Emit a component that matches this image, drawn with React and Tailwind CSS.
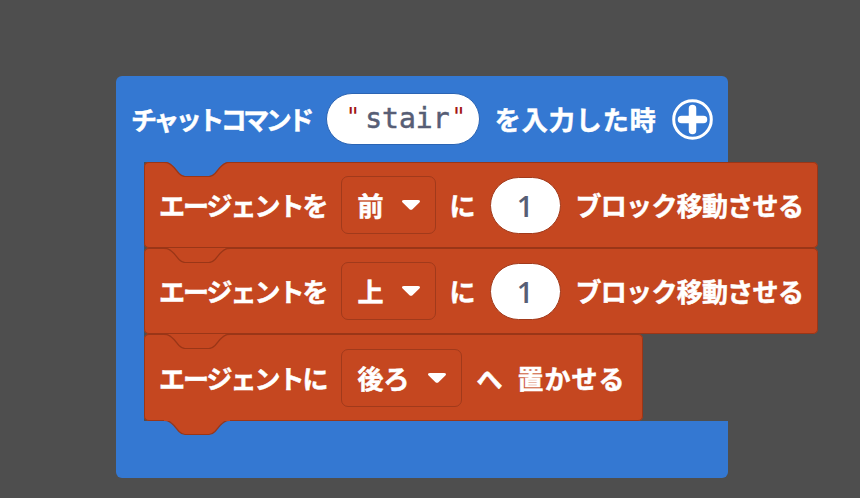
import React from "react";

const JP = { fontFamily: '"Noto Sans CJK JP", "Noto Sans", sans-serif' };

function Notch({ fill }) {
  return (
    <svg
      className="absolute top-0 left-[20px]"
      width="66"
      height="15"
      viewBox="0 0 66 15"
    >
      <path
        d="M0 0 C5 0 7 2 10 5 L15 11 C17 13 18 14 21 14 L45 14 C48 14 49 13 51 11 L56 5 C59 2 61 0 66 0 Z"
        fill={fill}
      />
      <path
        d="M0 0.5 C5 0.5 7 2.5 10 5.5 L15 11.5 C17 13.5 18 14.5 21 14.5 L45 14.5 C48 14.5 49 13.5 51 11.5 L56 5.5 C59 2.5 61 0.5 66 0.5"
        fill="none"
        stroke="#9a3617"
        strokeWidth="1.2"
      />
    </svg>
  );
}

function Tab() {
  return (
    <svg
      className="absolute top-[calc(100%-1px)] left-[20px]"
      width="66"
      height="16"
      viewBox="0 0 66 16"
    >
      <path
        d="M0 0 C5 0 7 2 10 5 L15 11 C17 13 18 14 21 14 L45 14 C48 14 49 13 51 11 L56 5 C59 2 61 0 66 0 Z"
        fill="#c54720"
      />
      <path
        d="M0 0.5 C5 0.5 7 2.5 10 5.5 L15 11.5 C17 13.5 18 14.5 21 14.5 L45 14.5 C48 14.5 49 13.5 51 11.5 L56 5.5 C59 2.5 61 0.5 66 0.5"
        fill="none"
        stroke="#9a3617"
        strokeWidth="1.2"
      />
      <rect x="0" y="0" width="66" height="1" fill="#c54720" />
    </svg>
  );
}

function Arrow() {
  return (
    <svg width="20" height="12" viewBox="0 0 20 12">
      <path
        d="M3 1 L17 1 C19 1 19.6 2.4 18.4 3.6 L11.5 10.2 C10.7 11 9.3 11 8.5 10.2 L1.6 3.6 C0.4 2.4 1 1 3 1 Z"
        fill="#ffffff"
      />
    </svg>
  );
}

function Dropdown({ label }) {
  return (
    <div className="shrink-0 h-[58px] pl-[15px] pr-[14px] flex items-center gap-[17px] rounded-[7px] border border-[#a13a1b] bg-[#c54720]">
      <span
        className="text-white text-[26px] font-bold leading-none [-webkit-text-stroke:0.5px_#ffffff]"
        style={JP}
      >
        {label}
      </span>
      <Arrow />
    </div>
  );
}

function NumPill() {
  return (
    <div className="shrink-0 h-[57px] w-[71px] rounded-full bg-white border border-[#a13a1b] flex items-center justify-center">
      <span
        className="text-[#575e75] text-[29px] font-semibold leading-none"
        style={{ fontFamily: '"Open Sans", "Noto Sans", sans-serif' }}
      >
        1
      </span>
    </div>
  );
}

function T({ children, className = "" }) {
  return (
    <span
      className={
        "shrink-0 text-white text-[26px] font-bold leading-none whitespace-nowrap [-webkit-text-stroke:0.5px_#ffffff] " +
        className
      }
      style={JP}
    >
      {children}
    </span>
  );
}

function RedBlock({ children, notchFill, tab, width, h }) {
  return (
    <div
      className={
        "relative shrink-0 rounded-[5px] bg-[#c54720] shadow-[inset_0_0_0_1px_#9a3617] flex items-center px-[15px] gap-[15px] " +
        width +
        " " +
        h
      }
    >
      <Notch fill={notchFill} />
      {children}
      {tab && <Tab />}
    </div>
  );
}

export default function App() {
  return (
    <div className="w-[860px] h-[498px] overflow-hidden bg-[#4e4e4e] pt-[76px] pl-[116px]">
      <div className="relative w-[612px]">
        {/* header */}
        <div className="h-[86px] rounded-t-[6px] bg-[#3478d2] flex items-center pl-[15px] pr-[14px]">
          <T className="tracking-[-3.5px]">チャットコマンド</T>
          <div
            className="shrink-0 ml-[15px] h-[52px] w-[154px] rounded-full bg-white border border-[#2b64b3] flex items-center pl-[17px] text-[28px] leading-none"
            style={{ fontFamily: '"DejaVu Sans Mono", "Liberation Mono", monospace' }}
          >
            <span className="text-[#a31515] text-[24px] -translate-y-[2px] pr-[5px] pl-[2px]">"</span>
            <span className="text-[#575e75] [-webkit-text-stroke:0.5px_#575e75]">stair</span>
            <span className="text-[#a31515] text-[24px] -translate-y-[2px] pl-[2px]">"</span>
          </div>
          <T className="ml-[15px] tracking-[1px]">を入力した時</T>
          <svg className="shrink-0 ml-[15px]" width="41" height="41" viewBox="0 0 41 41">
            <circle cx="20.5" cy="20.5" r="18.8" fill="none" stroke="#ffffff" strokeWidth="3" />
            <path d="M20.5 9.5 V31.5 M9.5 20.5 H31.5" stroke="#ffffff" strokeWidth="7.5" strokeLinecap="round" />
          </svg>
        </div>
        {/* middle */}
        <div className="flex">
          <div className="shrink-0 w-[28px] bg-[#3478d2]" />
          <div className="shrink-0 flex flex-col">
            <RedBlock notchFill="#3478d2" width="w-[674px]" h="h-[86px]">
              <T className="tracking-[-2px]">エージェントを</T>
              <Dropdown label="前" />
              <T className="-mx-[1px]">に</T>
              <NumPill />
              <T className="tracking-[-0.7px]">ブロック移動させる</T>
            </RedBlock>
            <RedBlock notchFill="#c54720" width="w-[674px]" h="h-[86px]">
              <T className="tracking-[-2px]">エージェントを</T>
              <Dropdown label="上" />
              <T className="-mx-[1px]">に</T>
              <NumPill />
              <T className="tracking-[-0.7px]">ブロック移動させる</T>
            </RedBlock>
            <RedBlock notchFill="#c54720" tab width="w-[499px]" h="h-[87px]">
              <T className="tracking-[-2px]">エージェントに</T>
              <Dropdown label="後ろ" />
              <T>へ</T>
              <T className="tracking-[1px]">置かせる</T>
            </RedBlock>
          </div>
        </div>
        {/* bottom */}
        <div className="h-[57px] rounded-b-[6px] bg-[#3478d2]" />
      </div>
    </div>
  );
}
